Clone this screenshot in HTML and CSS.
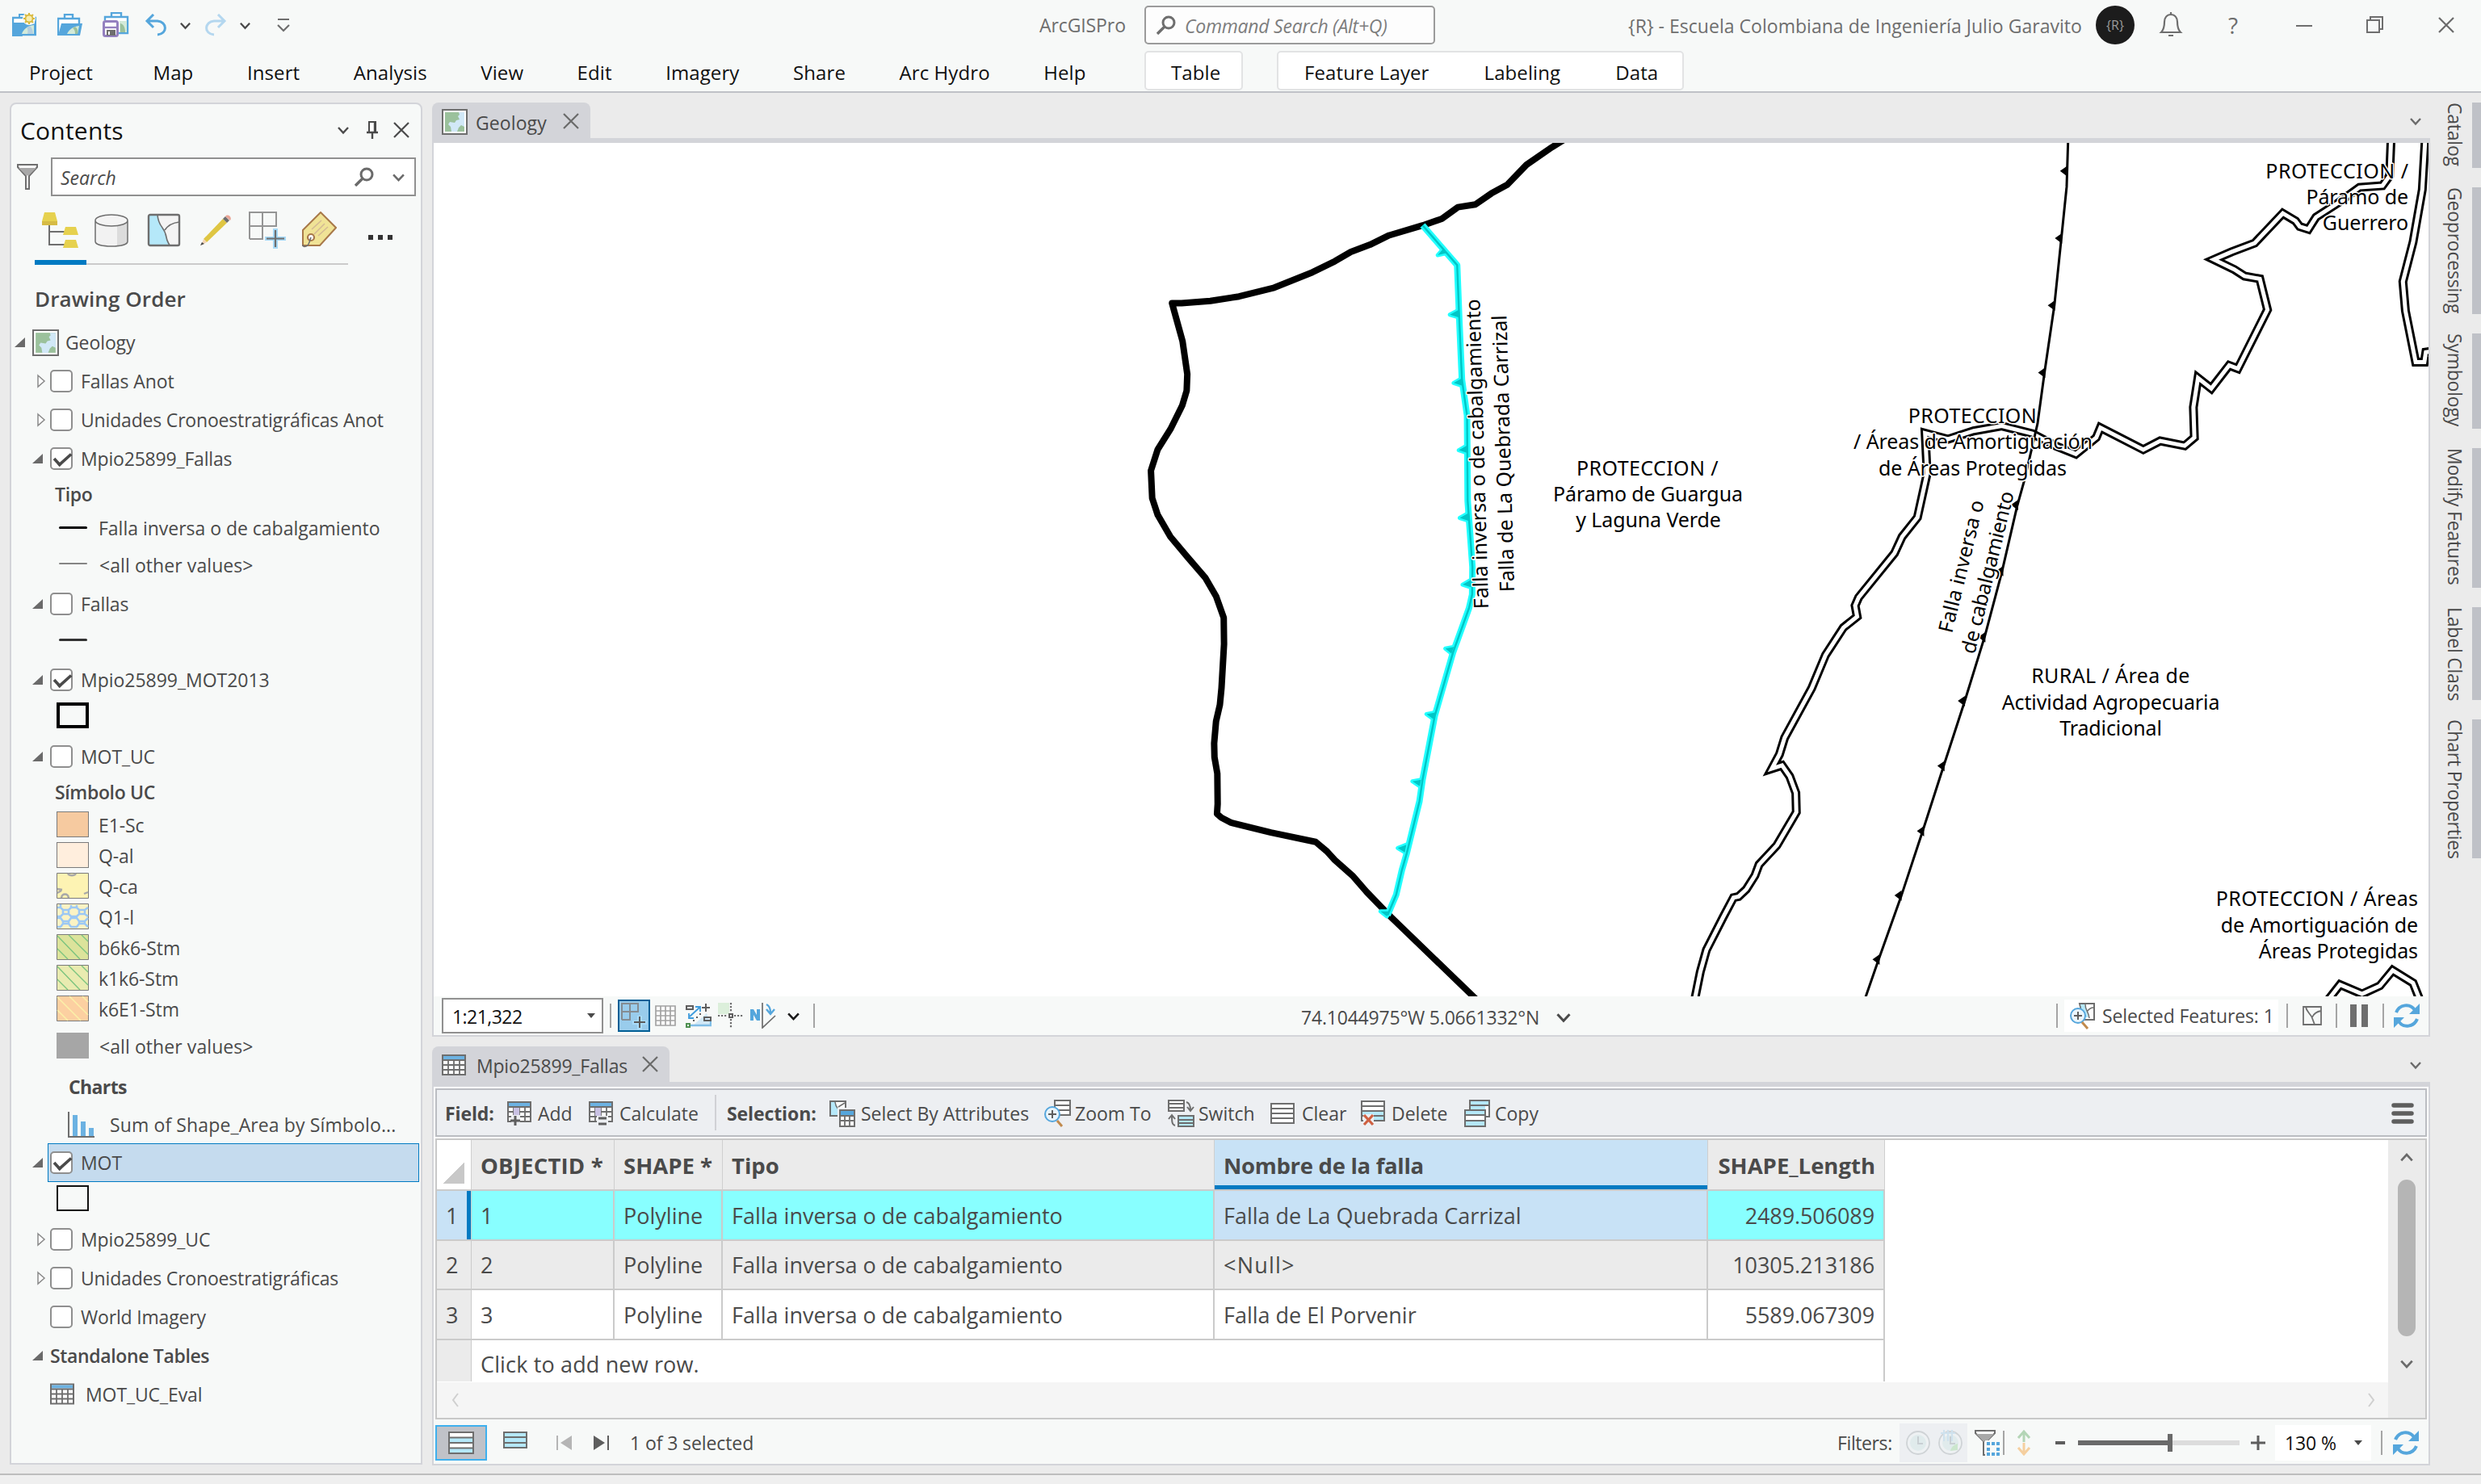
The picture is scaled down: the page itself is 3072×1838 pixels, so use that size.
FILE: index.html
```html
<!DOCTYPE html>
<html lang="en">
<head>
<meta charset="utf-8">
<title>ArcGISPro</title>
<link rel="stylesheet" href="styles.css">
</head>
<body>
<svg class="sprite" aria-hidden="true">
  <symbol id="chev" viewBox="0 0 16 16"><path d="M2 5l6 6.500 6-6.500" fill="none" stroke="currentColor" stroke-width="2.400"/></symbol>
  <symbol id="close" viewBox="0 0 20 20"><path d="M1 1l18 18M19 1L1 19" fill="none" stroke="currentColor" stroke-width="2.200"/></symbol>
  <symbol id="mag" viewBox="0 0 24 24"><circle cx="15" cy="9" r="7" fill="none" stroke="currentColor" stroke-width="3"/><path d="M10 14l-9 9" stroke="currentColor" stroke-width="3.400"/></symbol>
  <symbol id="map" viewBox="0 0 32 32"><path d="M1 1h30v30H1z" fill="#fff" stroke="#6e6e6e" stroke-width="2"/><path d="M4 4h24v24H4z" fill="#9bc19c"/><path d="M21 4h7v18l-4-2-3 3-2 5h-7l-1-6-3-3 2-3 6 1 2-3 4-1-2-4 2-2z" fill="#d1e8f7"/></symbol>
  <symbol id="table" viewBox="0 0 30 26"><path d="M1 1h28v24H1z" fill="#fff" stroke="#6e6e6e" stroke-width="2"/><path d="M2 2h26v4H2z" fill="#6cb2e2"/><path d="M2 7h26M2 13h26M2 19h26M8 7v18M15 7v18M22 7v18" stroke="#6e6e6e" stroke-width="1.800"/></symbol>
  <symbol id="list" viewBox="0 0 30 26"><path d="M1 1h28v24H1z" fill="#fff" stroke="#6e6e6e" stroke-width="2"/><path d="M1 7h28M1 13h28M1 19h28" stroke="#6e6e6e" stroke-width="2"/></symbol>
  <symbol id="refresh" viewBox="0 0 32 32"><g fill="none" stroke="#55a6dc" stroke-width="4"><path d="M3 12C7 2 20 0 26 9"/><path d="M29 20C25 30 12 32 6 23"/></g><path d="M32 1v13H19zM0 31V18h13z" fill="#55a6dc"/></symbol>
  <symbol id="open" viewBox="0 0 14 14"><path d="M14 0v13H0z" fill="#6a6a6a"/></symbol>
  <symbol id="shut" viewBox="0 0 11 18"><path d="M1 2l8 7-8 7z" fill="#fff" stroke="#8a8a8a" stroke-width="1.500"/></symbol>
  <symbol id="clock" viewBox="0 0 32 32"><circle cx="16" cy="16" r="14" fill="#eef1f3" stroke="#cfd3d6" stroke-width="1.800"/><circle cx="16" cy="16" r="10" fill="#e0ebec"/><path d="M16 8v9h6" fill="none" stroke="#c8cfd3" stroke-width="2"/></symbol>
  <symbol id="tooth" viewBox="0 0 1 1" overflow="visible"><path d="M-13 0L1-9V10z"/></symbol>
</svg>

<header class="titlebar">
  <svg width="30" height="30" viewBox="0 0 30 30"><path d="M1 6h28v21H1z" fill="#fff" stroke="#55a6dc" stroke-width="2.400"/><path d="M9 5V2h10M1 13l6 0 5 4h6l-6 11H1z" fill="none" stroke="#55a6dc" stroke-width="2"/><path d="M1 12h14l6 3 8-2v15H1z" fill="#55a6dc"/><path d="M12 26c2-6 7-10 15-11v11z" fill="#d3ead9"/><path d="M19 26c1-4 0-7-1-8l4-2c3 3 4 6 4 10z" fill="#b3cfe0"/><circle cx="21" cy="7" r="8" fill="#f7f9f8"/><path d="M21 0v14M14 7h14M16 2l10 10M26 2L16 12" stroke="#d9b93c" stroke-width="2"/><circle cx="21" cy="7" r="4.500" fill="#f7edb0" stroke="#d9b93c" stroke-width="1.800"/></svg>
  <svg width="32" height="28" viewBox="0 0 32 28"><path d="M9 6V1h10v5M1 27V6h26v6" fill="#fff" stroke="#55a6dc" stroke-width="2.400"/><path d="M1 27L5 12h26l-3 15z" fill="#55a6dc"/><path d="M12 25c2-5 7-9 15-10l-2 10z" fill="#d3ead9"/><path d="M22 25c0-4-1-6-3-7l3-2c3 2 4 5 3 9z" fill="#9bc19c"/></svg>
  <svg width="34" height="32" viewBox="0 0 34 32"><path d="M11 6V1h12v5M3 10V6h28v20H20" fill="#fff" stroke="#55a6dc" stroke-width="2.400"/><path d="M21 11h9v14h-9z" fill="#d3ead9"/><path d="M22 14c4 1 6 5 6 11h-6z" fill="#9bc19c"/><rect x="1.500" y="11.500" width="17" height="18" rx="2" fill="#fff" stroke="#9480bf" stroke-width="3"/><path d="M2 19h16" stroke="#9480bf" stroke-width="2.400"/><path d="M5 22h11v7H5z" fill="#6e6e6e"/><path d="M7 24h2v4H7z" fill="#fff"/></svg>
  <svg width="30" height="28" viewBox="0 0 30 28"><path d="M11 1L3 9l8 8M3 9h13c12 1 13 16 0 17" fill="none" stroke="#55a6dc" stroke-width="3"/></svg>
  <svg class="dark" width="15" height="15"><use href="#chev"/></svg>
  <svg width="30" height="28" viewBox="0 0 30 28"><path d="M17 1l8 8-8 8M25 9H12C0 10-1 25 12 26" fill="none" stroke="#b4d7ef" stroke-width="3"/></svg>
  <svg class="dark" width="15" height="15"><use href="#chev"/></svg>
  <svg width="16" height="20" viewBox="0 0 16 20"><path d="M1 3h14M1 10l7 7 7-7" fill="none" stroke="#6e6e6e" stroke-width="2.200"/></svg>
  <span class="app-name">ArcGISPro</span>
  <div class="cmd"><svg width="24" height="24"><use href="#mag"/></svg><em>Command Search (Alt+Q)</em></div>
  <span class="org">{R} - Escuela Colombiana de Ingeniería Julio Garavito</span>
  <span class="avatar">{R}</span>
  <svg width="32" height="34" viewBox="0 0 32 34"><path d="M4 26c3-3 4-6 4-13 0-5 3-9 8-9s8 4 8 9c0 7 1 10 4 13zM16 1v3M13 30h6" fill="none" stroke="#6e6e6e" stroke-width="2.200"/></svg>
  <span class="help">?</span>
  <svg width="20" height="20" viewBox="0 0 20 20"><path d="M0 11h20" stroke="#6e6e6e" stroke-width="2"/></svg>
  <svg width="22" height="22" viewBox="0 0 22 22"><path d="M1 5h15v15H1zM5 5V1h15v15h-4" fill="none" stroke="#6e6e6e" stroke-width="2"/></svg>
  <svg class="mid" width="20" height="20"><use href="#close"/></svg>
</header>

<nav class="ribbon">
  <a>Project</a><a>Map</a><a>Insert</a><a>Analysis</a><a>View</a><a>Edit</a><a>Imagery</a><a>Share</a><a>Arc Hydro</a><a>Help</a>
  <div class="ctx one"><a>Table</a></div>
  <div class="ctx three"><a>Feature Layer</a><a>Labeling</a><a>Data</a></div>
</nav>

<main class="workspace">
  <aside class="contents">
    <div class="pane-head"><h1>Contents</h1>
      <svg class="dark" width="16" height="16"><use href="#chev"/></svg>
      <svg width="14" height="22" viewBox="0 0 14 22"><path d="M3 1h8v13H3z" fill="#fff" stroke="#4a4a4a" stroke-width="2"/><path d="M10 1v13M0 14h14M7 14v8" stroke="#4a4a4a" stroke-width="2.400"/></svg>
      <svg class="dark" width="20" height="20"><use href="#close"/></svg>
    </div>
    <div class="search">
      <svg width="28" height="34" viewBox="0 0 28 34"><path d="M2 2h24v3L16 16v16h-4V16L2 5z" fill="#fff" stroke="#6e6e6e" stroke-width="2"/><path d="M3 6h22L15.500 15.500h-3z" fill="#a8a8a8"/></svg>
      <div class="box"><em>Search</em><svg class="mid" width="24" height="24"><use href="#mag"/></svg><svg class="mid" width="17" height="17"><use href="#chev"/></svg></div>
    </div>
    <div class="views">
      <svg width="46" height="46" viewBox="0 0 46 46"><path d="M9 16v25h20M9 25h20" fill="none" stroke="#6e6e6e" stroke-width="2"/><path d="M3 1h13l3 11H0zM29 19h13l3 10H26zM29 35h13l3 10H26z" fill="#e6d14e"/><path d="M0 12h19v5H0z" fill="#d6bb45"/></svg>
      <svg width="42" height="42" viewBox="0 0 42 42"><path d="M1 9v26c0 4 9 6 20 6s20-2 20-6V9z" fill="#f2f2f2"/><path d="M28 14l13-5v26c0 3-5 5-13 6z" fill="#dcdcdc"/><ellipse cx="21" cy="9" rx="20" ry="7" fill="#f4f4f4"/><path d="M1 9v26c0 4 9 6 20 6s20-2 20-6V9M1 9c0 4 9 7 20 7s20-3 20-7-9-7-20-7S1 5 1 9z" fill="none" stroke="#6e6e6e" stroke-width="1.500"/></svg>
      <svg width="42" height="42" viewBox="0 0 42 42"><rect x="2" y="2" width="38" height="38" rx="2" fill="#f4f4f4"/><path d="M2 2h12c0 16 8 14 10 28 1 6 3 7 4 10H2z" fill="#b5e8f9"/><path d="M13 2c1 16 9 14 11 28 1 6 3 7 4 10M22 21c4-6 9-9 18-10" fill="none" stroke="#6e6e6e" stroke-width="1.600"/><rect x="2" y="2" width="38" height="38" rx="2" fill="none" stroke="#6e6e6e" stroke-width="2.400"/></svg>
      <svg width="40" height="40" viewBox="0 0 40 40"><path d="M5 31L29 6l5 5L9 35z" fill="#dfc643"/><path d="M5 31l-3 8 7-4z" fill="#f3d5b5"/><path d="M3 35l-2 4 5-2z" fill="#4a4a4a"/><path d="M29 6l3-3 5 5-3 3z" fill="#6e6e6e"/><path d="M32 3c3-4 9 1 6 5z" fill="#eaa596"/></svg>
      <svg width="46" height="46" viewBox="0 0 46 46"><path d="M1 34V1h33v17H1M17 1v33H1M17 34h1" fill="none" stroke="#959595" stroke-width="2"/><path d="M30 21h6v10h10v5H36v10h-6V36H20v-5h10z" fill="#a7d9f6"/><path d="M33 23v21M22 33.500h22" stroke="#6e6e6e" stroke-width="2.200"/></svg>
      <svg width="43" height="45" viewBox="0 0 43 45"><path d="M23 1l19 19-20 22H1V23z" fill="#f0e396" stroke="#a8794a" stroke-width="2"/><path d="M24 11L12 22M28 15L15 28M32 19L20 30" stroke="#d4ba94" stroke-width="1.600"/><circle cx="11" cy="32" r="4" fill="#fff" stroke="#a8794a" stroke-width="2.200"/><path d="M11 32c-2 5-2 10-6 11-3 1-4 0-4-2" fill="none" stroke="#6e6e6e" stroke-width="1.600"/></svg>
      <i class="dots"></i>
    </div>
    <div class="viewbar"><i></i></div>
    <h2>Drawing Order</h2>
    <div class="tree">
      <div class="row root"><svg class="tw" width="13" height="13"><use href="#open"/></svg><svg width="33" height="33"><use href="#map"/></svg><span>Geology</span></div>
      <div class="row"><svg class="tw" width="11" height="18"><use href="#shut"/></svg><i class="cb"></i><span>Fallas Anot</span></div>
      <div class="row"><svg class="tw" width="11" height="18"><use href="#shut"/></svg><i class="cb"></i><span class="tight">Unidades Cronoestratigráficas Anot</span></div>
      <div class="row"><svg class="tw" width="13" height="13"><use href="#open"/></svg><i class="cb on"></i><span class="tight">Mpio25899_Fallas</span></div>
      <div class="row head r40"><b>Tipo</b></div>
      <div class="row leg r44"><i class="ln"></i><span class="fit">Falla inversa o de cabalgamiento</span></div>
      <div class="row leg"><i class="ln grey"></i><span class="nudge">&lt;all other values&gt;</span></div>
      <div class="row"><svg class="tw" width="13" height="13"><use href="#open"/></svg><i class="cb"></i><span>Fallas</span></div>
      <div class="row leg lineonly"><i class="ln soft"></i></div>
      <div class="row"><svg class="tw" width="13" height="13"><use href="#open"/></svg><i class="cb on"></i><span class="fit">Mpio25899_MOT2013</span></div>
      <div class="row leg patch"><i class="sw thick"></i></div>
      <div class="row"><svg class="tw" width="13" height="13"><use href="#open"/></svg><i class="cb"></i><span>MOT_UC</span></div>
      <div class="row head r41"><b>Símbolo UC</b></div>
      <div class="row leg r38"><i class="sw e1"></i><span>E1-Sc</span></div>
      <div class="row leg r38"><i class="sw qal"></i><span>Q-al</span></div>
      <div class="row leg r38"><svg class="swv" width="40" height="32" viewBox="0 0 40 32"><path d="M.500.500h39v31H.500z" fill="#fdf3b3" stroke="#7b7b7b"/><path d="M14 1c2 3 8 3 10 0M1 20l6 1M1 25l5-3M6 31c1-6 8-6 9 0M34 26l5-2" fill="none" stroke="#a8a8a8" stroke-width="2.400"/></svg><span>Q-ca</span></div>
      <div class="row leg r38"><svg class="swv" width="40" height="32" viewBox="0 0 40 32"><path d="M.500.500h39v31H.500z" fill="#fbf3c4" stroke="#7b7b7b"/><path d="M1 5h4l3 3h7l3-3h7l3 3h7l4-3M1 16h4l3-3h7l3 3h7l3-3h7l4 3M1 18h4l3 4h7l3-4h7l3 4h7l4-4M1 29h4l3-4h7l3 4h7l3-4h7l4 4M5 1v4M18 2v3M25 2v3M8 8v5M15 8v5M28 8v5M35 8v5M8 22v3M15 22v3M28 22v3M35 22v3" fill="none" stroke="#9cc8f4" stroke-width="2.600"/></svg><span>Q1-l</span></div>
      <div class="row leg r38"><svg class="swv" width="40" height="32" viewBox="0 0 40 32"><path d="M.500.500h39v31H.500z" fill="#dce39b" stroke="#7b7b7b"/><path d="M1 2l28 29M15 1l24 24M31 1l8 8M1 18l13 13" stroke="#7cc47f" stroke-width="1.400"/></svg><span>b6k6-Stm</span></div>
      <div class="row leg r38"><svg class="swv" width="40" height="32" viewBox="0 0 40 32"><path d="M.500.500h39v31H.500z" fill="#e9ebb0" stroke="#7b7b7b"/><path d="M1 2l28 29M15 1l24 24M31 1l8 8M1 18l13 13" stroke="#7cc47f" stroke-width="1.400"/></svg><span>k1k6-Stm</span></div>
      <div class="row leg r38"><svg class="swv" width="40" height="32" viewBox="0 0 40 32"><path d="M.500.500h39v31H.500z" fill="#fcd0a1" stroke="#7b7b7b"/><path d="M1 2l29 29M16 1l23 23M32 1l7 7M1 18l13 13" stroke="#fbf0a8" stroke-width="1.600"/></svg><span>k6E1-Stm</span></div>
      <div class="row leg r54"><i class="sw gry"></i><span class="nudge">&lt;all other values&gt;</span></div>
      <div class="row charts"><b>Charts</b></div>
      <div class="row sum"><svg width="33" height="32" viewBox="0 0 33 32"><path d="M1 0v31h32" fill="none" stroke="#6e6e6e" stroke-width="2"/><path d="M6 4h6v26H6zM16 12h6v18h-6zM26 20h6v10h-6z" fill="#6cb2e2"/></svg><span>Sum of Shape_Area by Símbolo...</span></div>
      <div class="row"><svg class="tw" width="13" height="13"><use href="#open"/></svg><div class="pick"><i class="cb on"></i><span>MOT</span></div></div>
      <div class="row leg patch"><i class="sw thin"></i></div>
      <div class="row"><svg class="tw" width="11" height="18"><use href="#shut"/></svg><i class="cb"></i><span>Mpio25899_UC</span></div>
      <div class="row"><svg class="tw" width="11" height="18"><use href="#shut"/></svg><i class="cb"></i><span class="tight">Unidades Cronoestratigráficas</span></div>
      <div class="row solo"><i class="cb"></i><span class="tight">World Imagery</span></div>
      <div class="row"><svg class="tw" width="13" height="13"><use href="#open"/></svg><b>Standalone Tables</b></div>
      <div class="row tbl"><svg width="30" height="27"><use href="#table"/></svg><span>MOT_UC_Eval</span></div>
    </div>
  </aside>

  <section class="center">
    <div class="tabs"><div class="tab t1"><svg width="32" height="32"><use href="#map"/></svg><span>Geology</span><svg class="mid" width="20" height="20"><use href="#close"/></svg></div><svg class="mid menu" width="16" height="16"><use href="#chev"/></svg></div>
    <div class="view">
      <svg class="map" viewBox="537 177 2470 1057" width="2470" height="1057">
        <g transform="translate(2080 170) scale(.6327 .6824)" fill="none">
          <g class="zone outer"><path id="za" d="M1392 0L1389 70 1375 88 1330 91 1290 118 1245 145 1230 167 1213 162 1205 152 1180 138 1125 192 1080 208 1045 222 1085 240 1105 252 1135 257 1150 313 1092 420 1075 414 1040 456 1014 437 1005 490 1007 545 988 560 940 551 907 567 823 527 815 545 775 575 735 560 690 538 630 524 575 533 525 548 480 537 484 610 465 690 435 725 420 755 350 835 343 850 347 870 320 890 285 940 258 1000 205 1090 195 1120 180 1146 200 1140 215 1160 227 1190 228 1225 190 1285 155 1320 147 1340 130 1365 115 1378 105 1380 85 1415 52 1475 40 1515 28 1570"/><path id="zb" d="M1459 0L1453 95 1435 190 1415 262 1420 315 1440 408 1457 408 1460 390 1475 388"/><path id="zc" d="M1265 1570L1292 1538 1335 1555 1370 1540 1395 1512 1435 1535 1450 1570"/></g>
          <g class="zone inner"><use href="#za"/><use href="#zb"/><use href="#zc"/></g>
          <path class="fault" d="M760 0L757 90 747 180 733 305 714 425 700 520 675 620 660 670 630 790 597 905 557 1025 516 1142 475 1260 433 1378 388 1495 360 1570"/>
          <g fill="#000"><use href="#tooth" x="757" y="61" width="1" height="1"/><use href="#tooth" x="747" y="183" width="1" height="1"/><use href="#tooth" x="733" y="305" width="1" height="1"/><use href="#tooth" x="714" y="427" width="1" height="1"/><use href="#tooth" x="661" y="667" width="1" height="1"/><use href="#tooth" x="632" y="787" width="1" height="1"/><use href="#tooth" x="597" y="907" width="1" height="1"/><use href="#tooth" x="557" y="1023" width="1" height="1"/><use href="#tooth" x="517" y="1141" width="1" height="1"/><use href="#tooth" x="477" y="1259" width="1" height="1"/><use href="#tooth" x="433" y="1376" width="1" height="1"/><use href="#tooth" x="390" y="1492" width="1" height="1"/></g>
        </g>
        <g transform="translate(1380 170) scale(.3954 .6824)" fill="none">
          <path class="limit" d="M1420 0L1370 18 1290 50 1230 86 1180 102 1130 122 1075 127 1025 148 965 160 860 178 800 195 740 208 690 225 620 245 500 273 390 289 300 297 210 301 180 301 213 370 228 430 226 460 212 487 175 530 135 567 114 605 118 655 135 685 175 725 230 763 285 800 318 833 342 872 343 920 335 1000 330 1030 318 1060 312 1100 313 1125 322 1155 323 1210 321 1228 335 1235 365 1244 490 1262 630 1279 665 1296 690 1312 745 1340 790 1370 860 1412 1146 1572"/>
          <g class="glow"><path id="sel" d="M965 160L1073 232 1079 321 1088 440 1104 505 1106 660 1121 780 1120 830 1110 855 1060 935 1003 1050 965 1165 955 1205 915 1300 900 1330 882 1375 855 1412"/><path id="selt" d="M1012 214l18-12 12 8zM1050 322l29-9v14zM1062 446l27-9v14zM1078 568l27-9v14zM1081 691l27-9v14zM1090 812l27-9v14zM1036 928l27-3-8 12zM977 1047l27-3-6 12zM933 1169l27-3-4 12zM887 1290l27-6-5 14zM833 1405h27l-7 9z"/></g>
          <g class="core"><use href="#sel"/><use href="#selt" class="full"/></g>
        </g>
        <g class="lab mid">
          <text class="caps" x="2040" y="588.500">PROTECCION /</text><text x="2040.500" y="621">Páramo de Guargua</text><text x="2041" y="653">y Laguna Verde</text>
          <text class="caps" x="2442.500" y="523.500">PROTECCION</text><text x="2443" y="556">/ Áreas de Amortiguación</text><text x="2442.500" y="588.500">de Áreas Protegidas</text>
          <text class="caps" x="2613.500" y="846">RURAL / Área de</text><text x="2613.500" y="878.500">Actividad Agropecuaria</text><text x="2613.500" y="911">Tradicional</text>
        </g>
        <g class="lab end">
          <text class="caps wide" x="2982.500" y="220.500">PROTECCION /</text><text x="2982" y="253">Páramo de</text><text x="2982" y="285">Guerrero</text>
          <text class="caps" x="2994.500" y="1122">PROTECCION / Áreas</text><text x="2994" y="1154.500">de Amortiguación de</text><text x="2994" y="1187">Áreas Protegidas</text>
        </g>
        <g class="lab">
          <text transform="translate(1843 754) rotate(-91.600)" textLength="384">Falla inversa o de cabalgamiento</text>
          <text transform="translate(1875 733) rotate(-91.600)" textLength="343">Falla de La Quebrada Carrizal</text>
          <text transform="translate(2417 785) rotate(-76.300)" textLength="168">Falla inversa o</text>
          <text transform="translate(2445 811) rotate(-76.300)" textLength="206">de cabalgamiento</text>
        </g>
      </svg>
      <div class="mapbar">
        <div class="scale"><span>1:21,322</span><i class="drop"></i></div>
        <i class="vs"></i>
        <span class="btn"><svg width="34" height="34" viewBox="0 0 34 34"><path d="M2 22V2h20v10H2M12 2v20H2" fill="none" stroke="#858c92" stroke-width="2"/><path d="M21 17h6v6h6v5h-6v6h-6v-6h-6v-5h6z" fill="#a9dcfa"/><path d="M24 18v14M17 25h14" stroke="#5a5a5a" stroke-width="2"/></svg></span>
        <svg width="26" height="26" viewBox="0 0 26 26"><path d="M1 1h24v24H1zM1 7h24M1 13h24M1 19h24M7 1v24M13 1v24M19 1v24" fill="#fff" stroke="#a3a3a3" stroke-width="1.700"/></svg>
        <svg width="32" height="30" viewBox="0 0 32 30"><path d="M8 28L26 12l5 14v2z" fill="#d1e8f7"/><path d="M4 27h27v-8" fill="none" stroke="#7fbde6" stroke-width="2.400"/><path d="M5 16L17 5M12 4h6v6M4 12v6h6" fill="none" stroke="#3d9bdc" stroke-width="1.800"/><path d="M1 3h8v4H1zM23 17h8v4h-8zM25 0v10M20 5h10" fill="none" stroke="#5e5e5e" stroke-width="2"/><path d="M9 20h2v2H9zM13 16h2v2h-2zM17 12h2v2h-2z" fill="#5e5e5e"/><path d="M1 25h4v4H1z" fill="#fff" stroke="#4f9153" stroke-width="2"/></svg>
        <svg width="32" height="32" viewBox="0 0 32 32"><path d="M0 0h14v14H0z" fill="#dcefdb"/><path d="M16 0v12M16 20v12M0 16h12M20 16h12" stroke="#6e6e6e" stroke-width="2.200" stroke-dasharray="2.200 1.800"/><path d="M14 14h4v4h-4z" fill="#fff" stroke="#5e5e5e" stroke-width="2"/></svg>
        <svg width="32" height="32" viewBox="0 0 32 32"><path d="M0 22V8h4l4 7V8h4v14H8l-4-7v7z" fill="#55a6dc"/><path d="M15 0v31l16-15" fill="none" stroke="#6e6e6e" stroke-width="1.700"/><path d="M20 2c4 2 5 5 5 10M20 8l5 6 5-6" fill="none" stroke="#55a6dc" stroke-width="2.400"/></svg>
        <svg class="blk" width="17" height="17"><use href="#chev"/></svg>
        <i class="vs"></i>
        <span class="coord">74.1044975°W 5.0661332°N</span>
        <svg class="coordchev" width="20" height="20"><use href="#chev"/></svg>
        <i class="vs"></i>
        <span class="selected"><svg width="33" height="34" viewBox="0 0 33 34"><path d="M13 2h18v20H18z" fill="#fff" stroke="#6e6e6e" stroke-width="2"/><path d="M14 3h5l5 16h-6z" fill="#b5e8f9"/><path d="M20 3c0 8 4 8 5 17M22 12c3-4 5-5 8-5" fill="none" stroke="#6e6e6e" stroke-width="1.500"/><circle cx="11" cy="17" r="9" fill="#eaf5fc" stroke="#55a6dc" stroke-width="2"/><path d="M11 12v10M6 17h10" stroke="#5e5e5e" stroke-width="2"/><path d="M16 25l7 8" stroke="#c08a4e" stroke-width="3"/></svg><span>Selected Features: 1</span></span>
        <i class="vs"></i>
        <svg width="24" height="24" viewBox="0 0 24 24"><path d="M1 1h22v22H1zM4 1c1 7 6 8 8 14l3 8M12 14c2-5 5-7 11-8" fill="none" stroke="#6e6e6e" stroke-width="1.800"/></svg>
        <i class="vs"></i>
        <svg width="24" height="30" viewBox="0 0 24 30"><path d="M1 1h8v28H1zM15 1h8v28h-8z" fill="#6e6e6e"/></svg>
        <i class="vs"></i>
        <svg width="32" height="32"><use href="#refresh"/></svg>
      </div>
    </div>

    <div class="tabs second"><div class="tab t2"><svg width="30" height="26"><use href="#table"/></svg><span>Mpio25899_Fallas</span><svg class="mid" width="20" height="20"><use href="#close"/></svg></div><svg class="mid menu" width="16" height="16"><use href="#chev"/></svg></div>
    <div class="tpane">
      <div class="tools">
        <b>Field:</b>
        <svg width="30" height="31" viewBox="0 0 30 31"><use href="#table" width="30" height="26"/><path d="M8 8h7v10H8z" fill="#c9c1e3"/><path d="M5 17h11v12H5z" fill="#edeff2"/><path d="M10 18v12M4 24h12" stroke="#5e5e5e" stroke-width="3"/></svg><span>Add</span>
        <svg width="30" height="31" viewBox="0 0 30 31"><use href="#table" width="30" height="26"/><path d="M8 8h7v10H8z" fill="#c9c1e3"/><path d="M10 18h14v12H10z" fill="#edeff2"/><path d="M12 21h10M12 28h10" stroke="#5e5e5e" stroke-width="3"/></svg><span>Calculate</span>
        <i class="rule"></i>
        <b class="sel">Selection:</b>
        <svg width="32" height="34" viewBox="0 0 32 34"><path d="M1 2h19v18H1z" fill="#fff" stroke="#6e6e6e" stroke-width="2"/><path d="M2 3h5l6 16H2z" fill="#b5e8f9"/><path d="M7 3c1 8 4 7 6 12M11 9l8-5" fill="none" stroke="#6e6e6e" stroke-width="1.500"/><path d="M10 10h22v24H10z" fill="#edeff2"/><path d="M13 13h18v20H13z" fill="#fff" stroke="#6e6e6e" stroke-width="2"/><path d="M14 14h16v5H14z" fill="#55a6dc"/><path d="M13 20h18M13 26h18M19 20v13M25 20v13" stroke="#6e6e6e" stroke-width="1.800"/></svg><span>Select By Attributes</span>
        <svg width="34" height="34" viewBox="0 0 34 34"><path d="M13 1h19v18H13zM13 7h19M13 13h19" fill="#fff" stroke="#6e6e6e" stroke-width="2"/><circle cx="10" cy="18" r="9" fill="#eaf5fc" stroke="#55a6dc" stroke-width="2"/><path d="M10 13v10M5 18h10" stroke="#5e5e5e" stroke-width="2"/><path d="M16 26l6 7" stroke="#c08a4e" stroke-width="3"/></svg><span>Zoom To</span>
        <svg width="33" height="34" viewBox="0 0 33 34"><path d="M1 1h19v13H1zM1 5h19M1 10h19" fill="#fff" stroke="#6e6e6e" stroke-width="2"/><path d="M13 20h19v13H13z" fill="#b5e8f9" stroke="#6e6e6e" stroke-width="2"/><path d="M13 25h19M13 29h19M23 3c4 1 5 5 5 10M24 9l4 5 4-5M9 32c-4-1-4-5-4-13M1 24l4-5 4 5" fill="none" stroke="#6e6e6e" stroke-width="2"/></svg><span>Switch</span>
        <svg width="30" height="28"><use href="#list"/></svg><span>Clear</span>
        <svg width="30" height="32" viewBox="0 0 30 32"><use href="#list" width="30" height="26"/><path d="M2 14h26v4H2zM14 20h14v4H14z" fill="#b5e8f9"/><path d="M3 17h13v14H3z" fill="#edeff2"/><path d="M4 18l11 12M15 18L4 30" stroke="#cf6041" stroke-width="3.200"/></svg><span>Delete</span>
        <svg width="32" height="34" viewBox="0 0 32 34"><path d="M7 1h24v20H7zM7 7h24" fill="#b5e8f9" stroke="#6e6e6e" stroke-width="2"/><path d="M26 8v12h4V8z" fill="#fff"/><path d="M1 13h25v20H1z" fill="#b5e8f9" stroke="#6e6e6e" stroke-width="2"/><path d="M2 20h23v6H2z" fill="#fff"/><path d="M1 19h25M1 26h25" stroke="#6e6e6e" stroke-width="2"/></svg><span>Copy</span>
        <svg width="28" height="28" viewBox="0 0 28 28"><path d="M3 4h22M3 14h22M3 24h22" stroke="#5e5e5e" stroke-width="5.500" stroke-linecap="round"/></svg>
      </div>
      <div class="gridbox">
        <div class="gridcol">
          <div class="table">
            <div class="tr hd"><i class="corner"></i><b>OBJECTID *</b><b>SHAPE *</b><b>Tipo</b><b class="cur">Nombre de la falla</b><b class="len">SHAPE_Length</b></div>
            <div class="tr picked"><span class="rh">1</span><span>1</span><span>Polyline</span><span>Falla inversa o de cabalgamiento</span><span class="cell">Falla de La Quebrada Carrizal</span><span class="num">2489.506089</span></div>
            <div class="tr alt"><span class="rh">2</span><span>2</span><span>Polyline</span><span>Falla inversa o de cabalgamiento</span><span class="null">&lt;Null&gt;</span><span class="num">10305.213186</span></div>
            <div class="tr"><span class="rh">3</span><span>3</span><span>Polyline</span><span>Falla inversa o de cabalgamiento</span><span>Falla de El Porvenir</span><span class="num">5589.067309</span></div>
            <div class="tr add"><span class="rh"></span><span class="new">Click to add new row.</span></div>
          </div>
          <div class="hscroll"><svg width="10" height="18" viewBox="0 0 10 18"><path d="M8 1L2 9l6 8" fill="none" stroke="#cfcfcf" stroke-width="2"/></svg><svg width="10" height="18" viewBox="0 0 10 18"><path d="M2 1l6 8-6 8" fill="none" stroke="#cfcfcf" stroke-width="2"/></svg></div>
        </div>
        <div class="vscroll"><svg class="mid flip" width="18" height="18"><use href="#chev"/></svg><i></i><svg class="mid" width="18" height="18"><use href="#chev"/></svg></div>
      </div>
      <div class="foot">
        <span class="mode"><svg width="32" height="28" viewBox="0 0 32 28"><path d="M1 1h30v26H1z" fill="#fff"/><path d="M1 7h30v7H1zM1 20h30v7H1z" fill="#b5e8f9"/><path d="M1 1h30v26H1zM1 7.500h30M1 14h30M1 20.500h30" fill="none" stroke="#6e6e6e" stroke-width="2"/></svg></span>
        <svg class="up" width="30" height="21" viewBox="0 0 30 21"><path d="M1 1h28v19H1zM1 7h28M1 14h28" fill="#b5e8f9" stroke="#6e6e6e" stroke-width="2"/></svg>
        <svg width="20" height="18" viewBox="0 0 20 18"><path d="M1 0v18" stroke="#b5b5b5" stroke-width="2"/><path d="M19 0v18L5 9z" fill="#b5b5b5"/></svg>
        <svg width="20" height="18" viewBox="0 0 20 18"><path d="M19 0v18" stroke="#5e5e5e" stroke-width="2"/><path d="M1 0v18l14-9z" fill="#5e5e5e"/></svg>
        <span>1 of 3 selected</span>
        <span class="fl">Filters:</span>
        <span class="clocks"><svg width="32" height="32"><use href="#clock"/></svg><svg width="34" height="32" viewBox="0 0 34 32"><use href="#clock" width="32" height="32"/><path d="M8 0v14M13 0v14M18 0v14M4 4h18" stroke="#cfe2ee" stroke-width="2"/><path d="M16 26c1-5 5-8 9-9v8z" fill="#cbe6cd"/></svg></span>
        <svg width="34" height="34" viewBox="0 0 34 34"><path d="M2 2h24v3L16 15v17h-4V15L2 5z" fill="#fff" stroke="#6e6e6e" stroke-width="2"/><path d="M3 6h22l-9 9.500h-4z" fill="#a8a8a8"/><path d="M14 14h20v20H14z" fill="#f7f9f8"/><path d="M16 16h4v4h-4zM22 16h4v4h-4zM28 16h4v4h-4zM16 23h4v4h-4zM28 23h4v4h-4zM16 29h4v4h-4zM22 29h4v4h-4zM28 29h4v4h-4z" fill="#55a6dc"/></svg>
        <i class="vs"></i>
        <svg width="18" height="32" viewBox="0 0 18 32"><path d="M9 15V4M2 10l7-8 7 8" fill="none" stroke="#b4d5b6" stroke-width="3"/><path d="M9 16v12M2 22l7 8 7-8" fill="none" stroke="#f5cf9f" stroke-width="3"/></svg>
        <i class="minus"></i>
        <div class="slider"><i></i></div>
        <svg width="18" height="18" viewBox="0 0 18 18"><path d="M9 0v18M0 9h18" stroke="#5e5e5e" stroke-width="3"/></svg>
        <span class="pct"><span>130 %</span><i class="drop"></i></span>
        <i class="vs"></i>
        <svg width="32" height="32"><use href="#refresh"/></svg>
      </div>
    </div>
  </section>

  <aside class="side"><span class="s1">Catalog</span><span class="s2">Geoprocessing</span><span class="s3">Symbology</span><span class="s4">Modify Features</span><span class="s5">Label Class</span><span class="s6">Chart Properties</span></aside>
</main>
<footer></footer>
</body>
</html>
```
FILE: styles.css
```css
* { box-sizing: border-box; }
body { margin: 0; width: 3072px; height: 1838px; overflow: hidden; display: flex; flex-direction: column; background: #ebebeb; color: #4a4a4a; font: 23px/1 "Open Sans", sans-serif; }
.sprite { position: absolute; width: 0; height: 0; }
svg { display: block; flex: none; }
i { font-style: normal; }
span, a, b, em, h1, h2 { white-space: nowrap; line-height: 32px; }
.dark { color: #4a4a4a; }
.mid { color: #6a6a6a; }
.blk { color: #1a1a1a; }

.titlebar { height: 63px; background: #f7f9f8; padding: 0 0 1px 15px; display: grid; grid-template-columns: 56px 56px 52px 43px 31px 43px 47px 944px 130px 599px 579px 77px 87px 84px 87px 89px 1fr; align-items: center; color: #6e6e6e; }
.app-name { letter-spacing: -.1px; }
.org { padding-top: 2px; letter-spacing: .03px; }
.cmd { width: 360px; height: 48px; border: 2px solid #9b9b9b; border-radius: 5px; background: #fdfdfd; display: flex; align-items: center; gap: 11px; padding-left: 13px; }
.cmd em { letter-spacing: -.25px; color: #7d7d7d; padding-top: 2px; }
.avatar { width: 48px; height: 48px; border-radius: 50%; background: #1c1c1c; color: #9a9a9a; display: flex; align-items: center; justify-content: center; font-size: 16px; }
.help { font-size: 28px; }

.ribbon { height: 52px; background: #f7f9f8; border-bottom: 2px solid #bfc1c7; display: flex; padding: 0 0 1px 36px; font-size: 24px; letter-spacing: .1px; color: #111; }
.ribbon a { margin-right: 66.500px; padding: 11px 0 0; }
.ribbon > a:first-child { margin-right: 74.500px; }
.ctx { background: #fff; border: 2px solid #e2e3e4; border-radius: 5px; display: flex; padding: 0 29px 0 31px; }
.ribbon .ctx a { padding-top: 9px; margin-right: 68px; }
.ribbon .ctx a:last-child { margin-right: 0; }
.one { width: 122px; margin-left: 6px; }
.three { width: 504px; margin-left: 42px; padding-left: 32px; }

.workspace { flex: none; height: 1710px; padding: 12px 0 0 12px; display: flex; }
footer { flex: 1; border-top: 2px solid #bdbdbd; background: #efefef; }

.contents { width: 511px; height: 1687px; margin-right: 12px; background: #f7f9f8; border: 2px solid #d3d4d9; border-radius: 8px 8px 0 0; }
.pane-head { height: 66px; display: flex; align-items: center; padding: 0 14px 3px 11px; }
.pane-head h1 { margin: 0 auto 0 0; font-size: 30px; font-weight: 400; color: #111; letter-spacing: .2px; padding-top: 3px; }
.pane-head svg { margin-left: 20px; }
.pane-head svg + svg { margin-left: 21px; }
.pane-head svg + svg + svg { margin-left: 19px; }
.search { display: flex; align-items: center; height: 48px; padding: 0 6px 0 6px; gap: 15px; }
.search .box { flex: 1; height: 48px; border: 2px solid #909090; background: #fff; display: flex; align-items: center; padding: 0 11px 0 10px; }
.search em { margin-right: auto; padding-top: 2px; }
.search .box svg + svg { margin-left: 22px; }
.views { height: 79px; display: grid; grid-template-columns: 65px 65px 65px 61px 66px 82px 1fr; padding: 4px 0 0 38px; align-items: center; }
.dots { width: 30px; height: 6px; margin-top: 18px; background: repeating-linear-gradient(90deg, #333 0 6px, transparent 6px 12px); }
.viewbar { width: 388px; height: 6px; margin-left: 29px; background: linear-gradient(#cbcbcb, #cbcbcb) 0 4px / 100% 2px no-repeat; }
.viewbar i { display: block; width: 64px; height: 6px; background: #007ac2; }
h2 { margin: 26px 0 0 29px; height: 46px; font-size: 26px; font-weight: 600; letter-spacing: .1px; }

.row { height: 48px; display: flex; align-items: center; padding-left: 48px; letter-spacing: -.1px; }
.row .tw { margin-left: -22px; margin-right: 9px; }
.row .tw[width="11"] { margin-left: -16px; margin-right: 5px; }
.row b { font-weight: 600; letter-spacing: -.35px; }
.root .tw { margin-left: -44px; }
.root span { margin-left: 8px; }
.row .tight { letter-spacing: -.18px; }
.row .fit { letter-spacing: -.02px; }
.cb { width: 28px; height: 28px; border: 2px solid #8f8f8f; border-radius: 5px; background: #fff; margin-right: 10px; flex: none; }
.cb.on::after { content: ""; display: block; width: 19px; height: 9px; border: solid #4a4a4a; border-width: 0 0 4px 4px; transform: translate(2px, 4px) rotate(-42deg) scale(.92); }
.head { padding-left: 54px; }
.leg { padding-left: 56px; }
.ln { width: 35px; height: 3px; background: #000; margin: 0 14px 0 3px; border-radius: 2px; }
.ln.grey { background: #858585; height: 2px; margin-top: -4px; }
.ln.soft { background: #333; }
.nudge { margin-left: 1px; letter-spacing: .08px; }
.sw { width: 40px; height: 32px; margin-right: 12px; border: 1px solid #7b7b7b; }
.swv { margin-right: 12px; }
.thick { border: 4px solid #000; }
.thin { border: 2px solid #111; }
.e1 { background: #f6caa0; }
.qal { background: #ffeedd; }
.gry { background: #a6a6a6; border-color: #a6a6a6; }
.r38 { height: 38px; }
.r38 span, .r54 span { padding-top: 2px; }
.r40 { height: 40px; padding-bottom: 1px; }
.r41 { height: 41px; padding-bottom: 1px; }
.r44 { height: 44px; padding-bottom: 1px; }
.r54 { height: 54px; }
.lineonly { height: 46px; padding-bottom: 6px; }
.patch { height: 47px; align-items: flex-start; padding-top: 4px; }
.charts { padding-left: 71px; }
.row.charts b { font-weight: 700; letter-spacing: -.6px; }
.sum { height: 46px; padding-left: 70px; }
.sum span { margin-left: 19px; letter-spacing: .12px; }
.pick { width: 460px; height: 48px; margin-left: -3px; padding-left: 2px; border: 1px solid #007ac2; background: #c5dbee; display: flex; align-items: center; }
.tbl { padding-bottom: 1px; }
.tbl span { margin-left: 14px; }

.center { width: 2474px; }
.tabs { height: 50px; border-bottom: 6px solid #d3d4d9; display: flex; align-items: center; justify-content: space-between; padding-right: 10px; }
.menu { margin-top: 2px; }
.tab { height: 44px; background: #d3d4d9; border-radius: 8px 8px 0 0; display: flex; align-items: center; padding-left: 12px; padding-top: 4px; }
.tab svg:last-child { margin-top: -3px; }
.t1 { width: 196px; }
.t1 span { margin: 2px 20px 0 10px; letter-spacing: .1px; }
.t2 { width: 294px; padding-top: 2px; }
.t2 span { margin: 2px 18px 0 13px; letter-spacing: -.2px; }
.second { margin-top: 12px; }
.view { height: 1107px; border: 2px solid #d3d4d9; border-top: 0; background: #fff; }
.map { height: 1057px; }
.limit { stroke: #000; stroke-width: 8px; stroke-linejoin: round; }
.limit, .fault, #sel, #selt, #za, #zb, #zc { vector-effect: non-scaling-stroke; }
.zone { stroke-linejoin: miter; stroke-miterlimit: 10; }
.outer { stroke: #000; stroke-width: 11px; }
.inner { stroke: #fff; stroke-width: 5px; }
.fault { stroke: #000; stroke-width: 3px; }
.glow { stroke: #2ff; stroke-width: 8px; stroke-linejoin: round; fill: none; }
#selt { stroke-width: 5px; }
.core { stroke: #00c6c6; stroke-width: 2.500px; }
.full { fill: #00c6c6; stroke: none; }
.lab { font: 25px "Noto Sans", sans-serif; fill: #000; stroke: #fff; stroke-width: 3px; paint-order: stroke; stroke-linejoin: round; letter-spacing: -.1px; }
.lab.mid { text-anchor: middle; }
.lab.end { text-anchor: end; }
.caps { letter-spacing: .4px; }
.wide { letter-spacing: .5px; }

.mapbar { height: 48px; background: #f7f9f8; padding: 0 0 0 10px; display: grid; align-items: center; grid-template-columns: 208px 10px 46px 38px 40px 40px 45px 33px 604px 315px 620px 10px 275px 20px 41px 17px 41px 14px 1fr; }
.scale { width: 200px; height: 44px; border: 2px solid #909090; background: #fff; display: flex; align-items: center; justify-content: space-between; padding: 0 8px 0 11px; color: #111; }
.scale span { letter-spacing: -.55px; padding-top: 2px; }
.drop { border: 5px solid transparent; border-top: 6px solid #4a4a4a; border-bottom: 0; }
.vs { width: 2px; height: 30px; background: #a5a5a5; }
.btn { width: 40px; height: 40px; border: 2px solid #005e95; background: #99ccec; padding: 1px; }
.coord { letter-spacing: -.2px; padding-top: 4px; }
.coordchev { color: #4a4a4a; margin-top: 3px; }
.selected { width: 265px; height: 40px; background: #fff; display: flex; align-items: center; gap: 8px; padding-left: 6px; letter-spacing: -.1px; }

.tpane { height: 469px; border: 2px solid #d3d4d9; border-top: 0; background: #fff; padding: 2px 2px 0; display: flex; flex-direction: column; }
.tools { height: 60px; border: 2px solid #bbbdc2; background: #edeff2; padding-left: 10px; display: grid; align-items: center; grid-template-columns: 77px 38px 63px 38px 118px 15px 127px 39px 227px 38px 115px 38px 89px 39px 73px 38px 90px 38px 1110px 1fr; }
.tools b { letter-spacing: -.1px; padding-top: 1px; }
.tools span { padding-top: 1px; }
.rule { width: 2px; height: 44px; background: #d0d1d5; }
.tools > svg { margin-top: 2px; }
.gridbox { margin-top: 2px; height: 348px; border: 2px solid #c8c8c8; display: flex; }
.gridcol { flex: 1; display: flex; flex-direction: column; background: #fff; }
.table { width: 1793px; height: 300px; font-size: 27px; letter-spacing: 0; }
.tr { display: grid; grid-template-columns: 43px 177px 134px 609px 611px 219px; height: 61.500px; }
.tr > * { border-right: 2px solid #cbcbcb; border-bottom: 2px solid #cbcbcb; padding-left: 11px; padding-top: 2px; display: flex; align-items: center; }
.hd { height: 63px; font-size: 27.500px; }
.hd > * { background: #ebebeb; border-right: 1px solid #cfcfcf; font-weight: 700; }
.hd b:nth-child(2) { letter-spacing: .2px; }
.hd .cur { background: #c8e2f6; box-shadow: inset 0 -5px #007ac2; letter-spacing: -.3px; }
.hd .len, .tr .num { padding: 2px 11px 0 0; justify-content: flex-end; }
.corner { background: #fff linear-gradient(to bottom right, transparent 50%, #c8c8c8 50%) 8px 28px / 26px 26px no-repeat !important; }
.tr .rh { background: #ebebeb; padding-left: 11px; border-right-width: 1px; }
.alt > * { background: #ebebeb; }
.null { letter-spacing: 1.200px; }
.picked > * { background: #8ff; }
.picked .cell { background: #c8e2f6; }
.picked .rh { background: #c8e2f6; box-shadow: inset -5px 0 #007ac2; }
.add { height: 51px; }
.add > * { border-bottom: 0; }
.add .new { grid-column: 2 / -1; letter-spacing: .15px; padding-top: 9px; }
.num { letter-spacing: -.1px; }
.hscroll { height: 44px; background: #f5f5f5; display: flex; align-items: center; justify-content: space-between; padding: 0 16px 0 18px; }
.vscroll { width: 46px; background: #ebebeb; display: flex; flex-direction: column; align-items: center; padding-top: 13px; }
.vscroll i { width: 22px; height: 194px; margin: 18px 0 25px; border-radius: 11px; background: #b5b5b5; }
.flip { transform: scaleY(-1); }
.foot { height: 55px; flex: none; background: #f7f9f8; display: grid; align-items: center; padding-top: 2px; grid-template-columns: 84px 66px 45px 46px 1495px 77px 92px 36px 17px 48px 28px 214px 30px 131px 15px 1fr; margin: 0 -2px; padding-left: 2px; }
.mode { width: 64px; height: 44px; border: 2px solid #3fb0ee; background: #c0c2c8; display: flex; align-items: center; justify-content: center; }
.up { margin-top: -6px; }
.foot > span { letter-spacing: -.1px; }
.foot .fl { letter-spacing: -.4px; }
.clocks { width: 84px; height: 48px; background: #edeff2; display: flex; align-items: center; gap: 8px; padding-left: 7px; }
.minus { width: 12px; height: 4px; background: #5e5e5e; }
.slider { display: flex; align-items: center; width: 200px; height: 6px; background: linear-gradient(90deg, #6a6a6a 114px, #dcdcdc 114px); }
.slider i { flex: none; width: 6px; height: 22px; margin-left: 111px; background: #6a6a6a; }
.pct { width: 119px; height: 44px; background: #fff; color: #111; display: flex; align-items: center; gap: 22px; padding-left: 12px; }

.side { flex: 1; display: flex; flex-direction: column; gap: 24px; align-items: flex-end; }
.side span { writing-mode: vertical-rl; border-right: 11px solid #bfc1c7; padding-right: 5px; letter-spacing: -.22px; }
.s1 { height: 81px; }
.s2 { height: 157px; }
.s3 { height: 118px; }
.s4 { height: 173px; }
.s5 { height: 115px; }
.s6 { height: 172px; }
```
